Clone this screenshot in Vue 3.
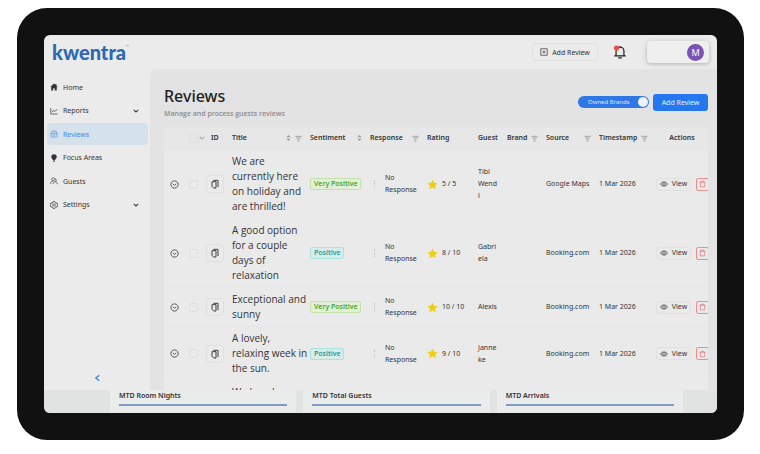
<script setup>
import { ref } from 'vue'

const icons = {
  home: { fill: true, d: 'M8 1 L0.5 8 H2.5 V15 H6.4 V10.5 H9.6 V15 H13.5 V8 H15.5 L12.8 5.4 V2 H10.8 V3.6 Z' },
  chart: { d: 'M1.5 2 V14 H15 M4 10 L7 6.5 L10 9 L14 4.5' },
  box: { d: 'M3 6.5 V4.5 L5 2 H11 L13 4.5 V6.5 M2 6.5 H14 V12.5 L12.5 14 H3.5 L2 12.5 Z M5.5 10 H10.5' },
  bulb: { fill: true, d: 'M8 0.5 C4.6 0.5 2.5 3 2.5 5.6 C2.5 8.2 5 9.6 5.6 11.8 H10.4 C11 9.6 13.5 8.2 13.5 5.6 C13.5 3 11.4 0.5 8 0.5 Z M6 12.8 H10 V14 L9 15.5 H7 L6 14 Z' },
  guests: { d: 'M6.5 1.5 A3 3 0 1 0 6.6 1.5 M1 13.5 C1.5 10 3.5 8 6 7.6 M10.5 3.5 A3 3 0 0 1 10.5 9.2 C8 9.5 6.5 11.5 6 14 M10.5 9.2 C13 9.8 14.5 11.5 15 14.5' },
  gear: { d: 'M6.5 1 H9.5 L10.2 3.2 L12 4.2 L14 3.8 L15.4 6.4 L14 8 L15.4 9.6 L14 12.2 L12 11.8 L10.2 12.8 L9.5 15 H6.5 L5.8 12.8 L4 11.8 L2 12.2 L0.6 9.6 L2 8 L0.6 6.4 L2 3.8 L4 4.2 L5.8 3.2 Z M8 5.6 A2.4 2.4 0 1 0 8.1 5.6' }
}

const menu = [
  { label: 'Home', icon: 'home' },
  { label: 'Reports', icon: 'chart', children: true },
  { label: 'Reviews', icon: 'box' },
  { label: 'Focus Areas', icon: 'bulb' },
  { label: 'Guests', icon: 'guests' },
  { label: 'Settings', icon: 'gear', children: true }
]

const columns = [
  { key: 'expand', label: '' },
  { key: 'select', label: '' },
  { key: 'id', label: 'ID' },
  { key: 'title', label: 'Title', sort: true, filter: true },
  { key: 'sentiment', label: 'Sentiment', sort: true },
  { key: 'response', label: 'Response', filter: true },
  { key: 'rating', label: 'Rating' },
  { key: 'guest', label: 'Guest' },
  { key: 'brand', label: 'Brand', filter: true },
  { key: 'source', label: 'Source', filter: true },
  { key: 'timestamp', label: 'Timestamp', filter: true },
  { key: 'actions', label: 'Actions' }
]

const reviews = [
  { title: 'We are\ncurrently here\non holiday and\nare thrilled!', sentiment: 'Very Positive', rating: '5 / 5', guest: 'Tibi\nWend\nl', source: 'Google Maps' },
  { title: 'A good option\nfor a couple\ndays of\nrelaxation', sentiment: 'Positive', rating: '8 / 10', guest: 'Gabri\nela', source: 'Booking.com' },
  { title: 'Exceptional and\nsunny', sentiment: 'Very Positive', rating: '10 / 10', guest: 'Alexis', source: 'Booking.com' },
  { title: 'A lovely,\nrelaxing week in\nthe sun.', sentiment: 'Positive', rating: '9 / 10', guest: 'Janne\nke', source: 'Booking.com' }
]

const nextTitle = 'We loved'

const stats = ['MTD Room Nights', 'MTD Total Guests', 'MTD Arrivals']

const active = ref('Reviews')
const ownedBrands = ref(true)
</script>

<template>
  <div class="device">
    <div class="screen">
      <header class="topbar">
        <a href="#" class="logo">kwentra<sup>™</sup></a>
        <button class="btn top-add">
          <svg class="icon" viewBox="0 0 16 16"><path d="M1.5 1.5 H14.5 V14.5 H1.5 Z M8 5 V11 M5 8 H11" /></svg>
          Add Review
        </button>
        <button class="bell" aria-label="Notifications">
          <svg viewBox="0 0 16 16">
            <path d="M1.5 12.5 H14.5 M3.5 12.5 V7 C3.5 4 5.5 2.5 8 2.5 C10.5 2.5 12.5 4 12.5 7 V12.5 M8 2.5 V1 M6 14.8 H10" />
            <circle cx="4" cy="3.5" r="3" />
          </svg>
        </button>
        <button class="user" aria-label="Account"><span class="avatar">M</span></button>
      </header>

      <div class="body">
        <aside class="sidebar">
          <nav>
            <a v-for="item in menu" :key="item.label" href="#" :class="{ active: active === item.label }" @click.prevent="active = item.label">
              <svg class="icon" :class="{ solid: icons[item.icon].fill }" viewBox="0 0 16 16"><path :d="icons[item.icon].d" /></svg>
              <span>{{ item.label }}</span>
              <svg v-if="item.children" class="chevron" viewBox="0 0 8 8"><path d="M1 2.5 L4 5.5 L7 2.5" /></svg>
            </a>
          </nav>
          <button class="collapse" aria-label="Collapse menu">
            <svg viewBox="0 0 8 8"><path d="M6 0.8 L2 4 L6 7.2" /></svg>
          </button>
        </aside>

        <main class="content">
          <div class="page-head">
            <div class="heading">
              <h1>Reviews</h1>
              <p>Manage and process guests reviews</p>
            </div>
            <label class="switch">
              <input v-model="ownedBrands" type="checkbox" />
              <span>Owned Brands</span>
              <i></i>
            </label>
            <button class="primary">Add Review</button>
          </div>

          <div class="table-wrap">
            <table>
              <colgroup>
                <col v-for="col in columns" :key="col.key" :class="'col-' + col.key" />
              </colgroup>
              <thead>
                <tr>
                  <th v-for="col in columns" :key="col.key" :class="'th-' + col.key">
                    <div class="th-inner">
                      <template v-if="col.key === 'select'">
                        <input type="checkbox" aria-label="Select all" />
                        <svg class="small-chevron" viewBox="0 0 8 8"><path d="M1 2.5 L4 5.5 L7 2.5" /></svg>
                      </template>
                      <span v-else>{{ col.label }}</span>
                      <svg v-if="col.sort" class="sort" viewBox="0 0 6 8"><path d="M3 0.5 L5.5 3 H0.5 Z M3 7.5 L5.5 5 H0.5 Z" /></svg>
                      <svg v-if="col.filter" class="filter" viewBox="0 0 8 8"><path d="M0.5 1.5 H7.5 M1.5 3.5 H6.5 M3 5.5 H5 M3 7 H5" /></svg>
                    </div>
                  </th>
                </tr>
              </thead>
              <tbody>
                <tr v-for="(row, i) in reviews" :key="i">
                  <td class="expand">
                    <button class="plain" aria-label="Expand row">
                      <svg class="icon" viewBox="0 0 16 16"><path d="M8 1.5 A6.5 6.5 0 1 0 8.1 1.5 M5.2 6.8 L8 9.6 L10.8 6.8" /></svg>
                    </button>
                  </td>
                  <td><input type="checkbox" aria-label="Select row" /></td>
                  <td class="id">
                    <button class="copy" aria-label="Copy ID">
                      <svg viewBox="0 0 12 14"><path d="M1.5 3.5 H7.5 V13 H4 L1.5 10.5 Z M3.5 1.5 H10.5 V11.5" /></svg>
                    </button>
                  </td>
                  <td class="title">{{ row.title }}</td>
                  <td><span class="tag" :class="{ very: row.sentiment === 'Very Positive' }">{{ row.sentiment }}</span></td>
                  <td><div class="response">No Response</div></td>
                  <td>
                    <div class="rating">
                      <svg viewBox="0 0 16 16"><path d="M8 0.8 L10.3 5.6 L15.5 6.2 L11.7 9.8 L12.7 15 L8 12.4 L3.3 15 L4.3 9.8 L0.5 6.2 L5.7 5.6 Z" /></svg>
                      {{ row.rating }}
                    </div>
                  </td>
                  <td class="guest">{{ row.guest }}</td>
                  <td></td>
                  <td class="nowrap">{{ row.source }}</td>
                  <td class="nowrap">1 Mar 2026</td>
                  <td>
                    <div class="row-actions">
                      <button class="btn view">
                        <svg class="icon" viewBox="0 0 16 16"><path d="M1 8 C4 2.5 12 2.5 15 8 C12 13.5 4 13.5 1 8 Z M8 5.5 A2.5 2.5 0 1 0 8.1 5.5" /></svg>
                        View
                      </button>
                      <button class="delete" aria-label="Delete">
                        <svg viewBox="0 0 16 16"><path d="M1.5 4 H14.5 M5 4 V1.5 H11 V4 M3 4 V14.5 H13 V4" /></svg>
                      </button>
                    </div>
                  </td>
                </tr>
                <tr>
                  <td colspan="3"></td>
                  <td class="title">{{ nextTitle }}</td>
                  <td colspan="8"></td>
                </tr>
              </tbody>
            </table>
          </div>
        </main>
      </div>

      <footer class="stats">
        <section v-for="stat in stats" :key="stat" class="stat">
          <h2>{{ stat }}</h2>
        </section>
      </footer>
    </div>
  </div>
</template>

<style>
body {
  margin: 0;
  background: #fff;
}
</style>

<style scoped>
* {
  box-sizing: border-box;
}

.device {
  height: calc(100vh - 22px);
  margin: 8px 16px 14px 17px;
  padding: 27px;
  background: #101110;
  border-radius: 30px;
  font-family: 'Noto Sans', 'Open Sans', sans-serif;
  font-size: 7px;
  color: #333;
}

.screen {
  display: flex;
  flex-direction: column;
  height: 100%;
  overflow: hidden;
  background: #ebebeb;
  border-radius: 6px;
}

button {
  padding: 0;
  font: inherit;
  color: inherit;
  background: none;
  border: none;
  cursor: pointer;
}

svg {
  display: block;
  flex: none;
  fill: none;
  stroke: currentColor;
  stroke-width: 1.4;
}

.icon {
  width: 8px;
  height: 8px;
}

.icon.solid {
  fill: currentColor;
  stroke: none;
}

.topbar {
  display: flex;
  align-items: center;
  flex: none;
  height: 34px;
  padding: 0 8px;
}

.logo {
  display: flex;
  margin-right: auto;
  font-family: Lato, sans-serif;
  font-size: 20px;
  font-weight: 900;
  line-height: 22px;
  color: #2d68b2;
  text-decoration: none;
}

.logo sup {
  font-size: 4px;
  font-weight: 400;
  line-height: 12px;
  color: #888;
}

.btn {
  display: flex;
  align-items: center;
  justify-content: center;
  border: 1px solid #e1e1e1;
  border-radius: 3px;
  white-space: nowrap;
}

.top-add {
  gap: 4px;
  width: 66px;
  height: 18px;
}

.bell {
  margin: 0 20px 0 15px;
  color: #222;
}

.bell svg {
  width: 14px;
  height: 14px;
}

.bell circle {
  fill: #f04a4a;
  stroke: none;
}

.user {
  display: flex;
  align-items: center;
  justify-content: flex-end;
  width: 62px;
  height: 22px;
  padding-right: 5px;
  background: #efefef;
  border-radius: 4px;
  box-shadow: 0 1px 4px rgba(0, 0, 0, 0.25);
}

.avatar {
  width: 17px;
  height: 17px;
  border-radius: 50%;
  background: #7a52b3;
  color: #fff;
  font-size: 9px;
  line-height: 17px;
  text-align: center;
}

.body {
  display: flex;
  flex: 1;
  min-height: 0;
}

.sidebar {
  position: relative;
  flex: none;
  width: 106px;
  padding: 7px 2px 0 3px;
}

nav {
  display: flex;
  flex-direction: column;
  justify-content: space-between;
  height: 140px;
}

nav a {
  display: flex;
  align-items: center;
  gap: 5px;
  height: 22px;
  padding: 0 9px 0 3px;
  border-radius: 4px;
  color: #333;
  text-decoration: none;
}

nav a.active {
  background: #d5e2ec;
  color: #3d8bf0;
}

.chevron {
  width: 6px;
  height: 6px;
  margin-left: auto;
}

.collapse {
  position: absolute;
  left: 50px;
  bottom: 8px;
  color: #3488cc;
}

.collapse svg {
  width: 7px;
  height: 8px;
}

.content {
  display: flex;
  flex-direction: column;
  flex: 1;
  min-width: 0;
  padding: 16px 9px 0 14px;
  background: #e3e3e3;
  border-radius: 6px 0 0 0;
}

.page-head {
  display: flex;
  align-items: center;
  flex: none;
  height: 34px;
  margin-bottom: 8px;
}

.heading {
  margin-right: auto;
  padding-top: 3px;
}

h1 {
  margin: 0;
  font-size: 16px;
  font-weight: 500;
  line-height: 20px;
  color: #1f1f1f;
}

.heading p {
  margin: 0;
  font-family: 'Open Sans', sans-serif;
  font-weight: 600;
  line-height: 16px;
  color: #8c8c8c;
}

.switch {
  display: flex;
  align-items: center;
  justify-content: space-between;
  width: 71px;
  height: 12px;
  margin-right: 4px;
  padding: 0 1px 0 10px;
  border-radius: 6px;
  background: #2f78e6;
  color: #dce9fb;
  font-size: 6px;
}

.switch input {
  position: absolute;
  opacity: 0;
}

.switch i {
  width: 10px;
  height: 10px;
  border-radius: 50%;
  background: #eef1f5;
}

.primary {
  width: 55px;
  height: 17px;
  border-radius: 3px;
  background: #2477ef;
  color: #e8f1fd;
}

.table-wrap {
  flex: 1;
  min-height: 0;
  overflow: hidden;
  background: #eaeaea;
}

table {
  width: 100%;
  min-width: 548px;
  table-layout: fixed;
  border-collapse: separate;
  border-spacing: 0;
}

.col-expand { width: 21px; }
.col-select { width: 20px; }
.col-id { width: 23px; }
.col-title { width: 78px; }
.col-sentiment { width: 60px; }
.col-response { width: 57px; }
.col-rating { width: 51px; }
.col-guest { width: 29px; }
.col-brand { width: 39px; }
.col-source { width: 53px; }
.col-timestamp { width: 57px; }
.col-actions { width: 60px; }

th,
td {
  padding: 4px;
  border-bottom: 1px solid #e6e6e6;
  text-align: left;
  vertical-align: middle;
  line-height: 12px;
}

th {
  height: 23px;
  font-weight: 600;
  background: #e7e7e7;
}

.th-inner {
  display: flex;
  align-items: center;
  gap: 4px;
}

.th-inner span {
  margin-right: auto;
}

.th-select {
  padding-right: 0;
}

.th-select .th-inner {
  gap: 1px;
}

.th-id {
  padding-left: 6px;
}

.th-actions span {
  margin: 0 auto;
}

.small-chevron {
  width: 6px;
  height: 6px;
  color: #aaa;
}

.sort {
  width: 5px;
  height: 8px;
  fill: #999;
  stroke: none;
}

.filter {
  width: 7px;
  height: 7px;
  color: #999;
  stroke-width: 1;
}

td input,
th input {
  display: block;
  appearance: none;
  flex: none;
  width: 9px;
  height: 9px;
  margin: 0;
  border: 1px solid #dedede;
  border-radius: 2px;
}

td.expand {
  padding-left: 6px;
}

.plain {
  display: block;
}

.expand .icon {
  width: 9px;
  height: 9px;
}

td.id {
  padding: 0 1px;
}

.copy {
  display: flex;
  align-items: center;
  justify-content: center;
  width: 18px;
  height: 18px;
  border: 1px solid #e0e0e0;
  border-radius: 3px;
}

.copy svg {
  width: 8px;
  height: 10px;
}

td.title {
  padding-right: 0;
  font-family: 'Open Sans', 'Noto Sans', sans-serif;
  font-size: 10px;
  line-height: 15px;
  white-space: pre;
}

.tag {
  display: inline-block;
  padding: 0 3px;
  border: 1px solid #a9e2de;
  border-radius: 2px;
  background: #d6eeeb;
  color: #16979c;
  font-family: 'Open Sans', sans-serif;
  font-weight: 600;
  line-height: 10px;
  white-space: nowrap;
}

.tag.very {
  border-color: #c4e3ac;
  background: #e3f0d6;
  color: #3fa01c;
}

.response {
  display: flex;
  align-items: center;
  gap: 10px;
  padding-left: 4px;
}

.response::before {
  content: '';
  flex: none;
  height: 8px;
  border-left: 1px dotted #c4c4c4;
}

.rating {
  display: flex;
  align-items: center;
  gap: 4px;
  white-space: nowrap;
}

.rating svg {
  width: 11px;
  height: 11px;
  fill: #edcf1b;
  stroke: none;
}

.guest {
  white-space: pre;
}

.nowrap {
  white-space: nowrap;
}

.row-actions {
  display: flex;
  align-items: center;
  gap: 5px;
}

.view {
  flex: none;
  gap: 4px;
  width: 35px;
  height: 13px;
}

.delete {
  display: flex;
  align-items: center;
  justify-content: center;
  flex: none;
  width: 13px;
  height: 13px;
  border: 1px solid #ee8c90;
  border-radius: 2px;
  color: #e8606a;
}

.delete svg {
  width: 7px;
  height: 8px;
}

.stats {
  display: flex;
  gap: 7px;
  flex: none;
  height: 23px;
  padding: 0 34px 0 66px;
  background: #e0e3e2;
}

.stat {
  flex: 1;
  padding: 0 9px;
  background: #eaebeb;
}

h2 {
  margin: 0;
  padding-bottom: 2px;
  border-bottom: 2px solid #7f9cc5;
  font-size: 7px;
  font-weight: 600;
  line-height: 12px;
}
</style>
